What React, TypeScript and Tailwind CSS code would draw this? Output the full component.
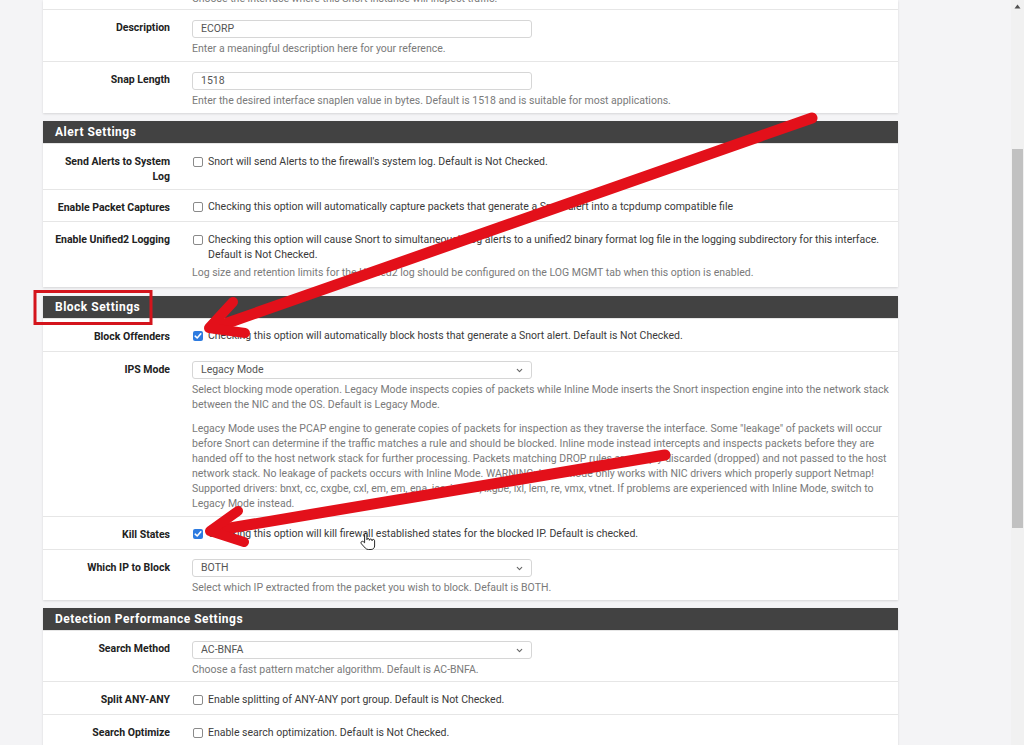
import React from "react";
import { ChevronDown } from "lucide-react";

const Check = ({ checked }: { checked?: boolean }) =>
  checked ? (
    <span className="mt-[2.5px] flex h-[10px] w-[10px] shrink-0 items-center justify-center rounded-[2px] bg-[#2d7be0]">
      <svg width="8" height="8" viewBox="0 0 8 8">
        <path d="M1.2 4.2 3.2 6 6.8 1.8" fill="none" stroke="#fff" strokeWidth="1.6" strokeLinecap="round" strokeLinejoin="round" />
      </svg>
    </span>
  ) : (
    <span className="mt-[2.5px] h-[10px] w-[10px] shrink-0 rounded-[2px] border border-[#8a8a8a] bg-white" />
  );

const Row = ({
  label,
  children,
  pt = "pt-[10px]",
  pb = "pb-[7px]",
}: {
  label: React.ReactNode;
  children: React.ReactNode;
  pt?: string;
  pb?: string;
}) => (
  <div className="grid grid-cols-[127px_1fr] border-t border-[#e6e6e6]">
    <div className="pt-[10px] pb-[5px] text-right text-[10.5px] font-bold leading-[15px] text-[#222]">
      {label}
    </div>
    <div className={`pl-[22px] pr-[6px] ${pt} ${pb}`}>{children}</div>
  </div>
);

const Help = ({ children, className = "" }: { children: React.ReactNode; className?: string }) => (
  <p className={`whitespace-nowrap text-[10.5px] leading-[15px] text-[#7a7a7a] ${className}`}>{children}</p>
);

const CheckLine = ({ checked, children }: { checked?: boolean; children: React.ReactNode }) => (
  <div className="flex items-start gap-[5px] pl-[1px]">
    <Check checked={checked} />
    <div className="whitespace-nowrap text-[10.5px] leading-[15px] text-[#3a3a3a]">{children}</div>
  </div>
);

const Field = ({ value, select }: { value: string; select?: boolean }) => (
  <div className="flex h-[18px] w-[340px] items-center justify-between rounded-[3px] border border-[#d6d6d6] bg-white pl-[8px] pr-[7px] text-[10.5px] text-[#555]">
    <span>{value}</span>
    {select && <ChevronDown size={9} strokeWidth={3} color="#666" />}
  </div>
);

const Header = ({ title }: { title: string }) => (
  <div className="flex h-[22px] items-center bg-[#424242] pl-[12px] text-[12px] font-bold tracking-[0.5px] text-white">
    {title}
  </div>
);

const Panel = ({ className = "", children }: { className?: string; children: React.ReactNode }) => (
  <div className={`bg-white shadow-[0_1px_2px_rgba(0,0,0,0.12)] ${className}`}>{children}</div>
);

export default function App() {
  return (
    <div className="relative flex h-[745px] w-[1024px] overflow-hidden bg-[#f4f4f6] font-['Roboto',sans-serif]">
      <div className="flex-1 pl-[43px]">
        <div className="w-[855px]">
          <Panel>
            <div className="h-[9px] overflow-hidden pl-[149px]">
              <Help className="mt-[-9px]">Choose the interface where this Snort instance will inspect traffic.</Help>
            </div>
            <Row label="Description" pb="pb-[5px]">
              <Field value="ECORP" />
              <Help className="mt-[3px]">Enter a meaningful description here for your reference.</Help>
            </Row>
            <Row label="Snap Length" pb="pb-[5px]">
              <Field value="1518" />
              <Help className="mt-[3px]">
                Enter the desired interface snaplen value in bytes. Default is 1518 and is suitable for most applications.
              </Help>
            </Row>
          </Panel>

          <Panel className="mt-[8px]">
            <Header title="Alert Settings" />
            <Row label={<>Send Alerts to System<br />Log</>}>
              <CheckLine>Snort will send Alerts to the firewall's system log. Default is Not Checked.</CheckLine>
            </Row>
            <Row label="Enable Packet Captures" pt="pt-[9px]" pb="pb-[7px]">
              <CheckLine>
                Checking this option will automatically capture packets that generate a Snort alert into a tcpdump compatible file
              </CheckLine>
            </Row>
            <Row label="Enable Unified2 Logging">
              <CheckLine>
                Checking this option will cause Snort to simultaneously log alerts to a unified2 binary format log file in the logging subdirectory for this interface.
                <br />
                Default is Not Checked.
              </CheckLine>
              <Help className="mt-[3px]">
                Log size and retention limits for the Unified2 log should be configured on the LOG MGMT tab when this option is enabled.
              </Help>
            </Row>
          </Panel>

          <Panel className="mt-[9px]">
            <Header title="Block Settings" />
            <Row label="Block Offenders" pt="pt-[9px]" pb="pb-[8px]">
              <CheckLine checked>
                Checking this option will automatically block hosts that generate a Snort alert. Default is Not Checked.
              </CheckLine>
            </Row>
            <Row label="IPS Mode" pt="pt-[9px]" pb="pb-[5px]">
              <Field value="Legacy Mode" select />
              <Help className="mt-[3px]">
                Select blocking mode operation. Legacy Mode inspects copies of packets while Inline Mode inserts the Snort inspection engine into the network stack
                <br />
                between the NIC and the OS. Default is Legacy Mode.
              </Help>
              <Help className="mt-[9px]">
                Legacy Mode uses the PCAP engine to generate copies of packets for inspection as they traverse the interface. Some "leakage" of packets will occur
                <br />
                before Snort can determine if the traffic matches a rule and should be blocked. Inline mode instead intercepts and inspects packets before they are
                <br />
                handed off to the host network stack for further processing. Packets matching DROP rules are simply discarded (dropped) and not passed to the host
                <br />
                network stack. No leakage of packets occurs with Inline Mode. WARNING: Inline Mode only works with NIC drivers which properly support Netmap!
                <br />
                Supported drivers: bnxt, cc, cxgbe, cxl, em, em, ena, ice, igb, ixl, ixgbe, ixl, lem, re, vmx, vtnet. If problems are experienced with Inline Mode, switch to
                <br />
                Legacy Mode instead.
              </Help>
            </Row>
            <Row label="Kill States" pt="pt-[9px]" pb="pb-[8px]">
              <CheckLine checked>
                Checking this option will kill firewall established states for the blocked IP. Default is checked.
              </CheckLine>
            </Row>
            <Row label="Which IP to Block" pt="pt-[9px]" pb="pb-[5px]">
              <Field value="BOTH" select />
              <Help className="mt-[3px]">Select which IP extracted from the packet you wish to block. Default is BOTH.</Help>
            </Row>
          </Panel>

          <Panel className="mt-[8px]">
            <Header title="Detection Performance Settings" />
            <Row label="Search Method" pb="pb-[4px]">
              <Field value="AC-BNFA" select />
              <Help className="mt-[3px]">Choose a fast pattern matcher algorithm. Default is AC-BNFA.</Help>
            </Row>
            <Row label="Split ANY-ANY">
              <CheckLine>Enable splitting of ANY-ANY port group. Default is Not Checked.</CheckLine>
            </Row>
            <Row label="Search Optimize">
              <CheckLine>Enable search optimization. Default is Not Checked.</CheckLine>
            </Row>
          </Panel>
        </div>
      </div>

      {/* scrollbar */}
      <div className="flex w-[13px] flex-col bg-[#f1f1f1]">
        <div className="flex h-[13px] items-center justify-center">
          <svg width="7" height="5" viewBox="0 0 7 5">
            <path d="M3.5 0.5 6.5 4.5H0.5Z" fill="#505050" />
          </svg>
        </div>
        <div className="h-[136px]" />
        <div className="mx-[1px] h-[379px] bg-[#c1c1c1]" />
      </div>

      {/* annotations */}
      <svg className="pointer-events-none absolute inset-0" width="1024" height="745" viewBox="0 0 1024 745">
        <rect x="35" y="291.5" width="116" height="32" fill="none" stroke="#d4141c" strokeWidth="3" />
        <g fill="none" stroke="#e3101a" strokeLinecap="round" strokeLinejoin="round">
          <path d="M812 118 L216 327" strokeWidth="11" />
          <path d="M233 302 L209 328 L245 333" strokeWidth="10" />
          <path d="M665 455 L218 530" strokeWidth="11" />
          <path d="M238 511 L210 531 L244 542" strokeWidth="10" />
        </g>
        <g transform="translate(361 532)">
          <path
            d="M5 1.2c-.8 0-1.4.6-1.4 1.4v8.2L2.4 9.7c-.7-.6-1.7-.5-2.2.2-.4.6-.3 1.4.2 1.9l3.9 4.3c.8.9 1.9 1.4 3.1 1.4h2.7c2 0 3.5-1.6 3.5-3.5V8.7c0-.7-.6-1.3-1.3-1.3s-1.3.6-1.3 1.3v-.4c0-.7-.6-1.3-1.3-1.3s-1.3.6-1.3 1.3v-.5c0-.7-.6-1.3-1.3-1.3s-1.2.5-1.2 1.1V2.6c0-.8-.6-1.4-1.4-1.4z"
            fill="#fff"
            stroke="#111"
            strokeWidth="0.9"
          />
        </g>
      </svg>
    </div>
  );
}
